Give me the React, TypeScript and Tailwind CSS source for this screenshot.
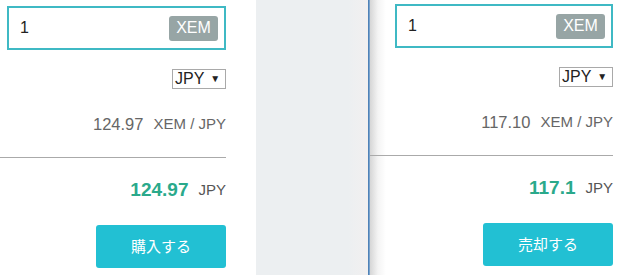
import React from "react";

const font = { fontFamily: '"Liberation Sans", Arial, "Noto Sans CJK JP", sans-serif' };

function Column({
  rate,
  total,
  label,
  inputMl,
  topOffset,
}: {
  rate: string;
  total: string;
  label: string;
  inputMl: string;
  topOffset: string;
}) {
  return (
    <div className={`flex flex-col ${topOffset}`}>
      <div
        className={`${inputMl} h-[44px] border-2 border-[#3fb9c4] flex items-center justify-between pl-[11px] pr-[6px] bg-white`}
      >
        <span className="text-[16px] text-[#222]">1</span>
        <span className="h-[25px] w-[49px] rounded-[3px] bg-[#97a5a5] text-white text-[16px] flex items-center justify-center">
          XEM
        </span>
      </div>
      <div className="self-end mt-[19px] h-[20px] w-[54px] border border-[#a9a9a9] bg-white flex items-center pl-[2px] gap-[6px]">
        <span className="text-[16px] text-[#222] leading-none">JPY</span>
        <span className="text-[10px] text-[#222] leading-none">▼</span>
      </div>
      <div className="self-end mt-[25px] h-[20px] flex items-center gap-[10px] text-[#666]">
        <span className="text-[16.5px]">{rate}</span>
        <span className="text-[15px]">XEM / JPY</span>
      </div>
      <div className="mt-[23px] h-px bg-[#aaaaaa]" />
      <div className="self-end mt-[20px] h-[24px] flex items-center gap-[10px]">
        <span className="text-[19px] font-bold text-[#2aa98b]">{total}</span>
        <span className="text-[15px] text-[#555]">JPY</span>
      </div>
      <div
        className="self-end mt-[23px] h-[43px] w-[130px] rounded-[3px] bg-[#22c0d3] text-white text-[15px] flex items-center justify-center"
        style={{ fontFamily: '"Noto Sans CJK JP", sans-serif' }}
      >
        {label}
      </div>
    </div>
  );
}

export default function App() {
  return (
    <div className="w-[624px] h-[275px] flex overflow-hidden bg-white" style={font}>
      <div className="w-[256px] pr-[30px] bg-white">
        <Column rate="124.97" total="124.97" label="購入する" inputMl="ml-[7px]" topOffset="pt-[6px]" />
      </div>
      <div className="w-[112px] bg-[linear-gradient(to_right,#eceff1_82%,#f2f0f0)]" />
      <div className="w-[2px] bg-[linear-gradient(to_right,#3a72ad,#8fb3d6)]" />
      <div className="flex-1 pr-[11px] bg-[linear-gradient(to_right,#d6d6d6,#f4f4f4_8px,#ffffff_16px)]">
        <Column rate="117.10" total="117.1" label="売却する" inputMl="ml-[25px]" topOffset="pt-[4px]" />
      </div>
    </div>
  );
}
